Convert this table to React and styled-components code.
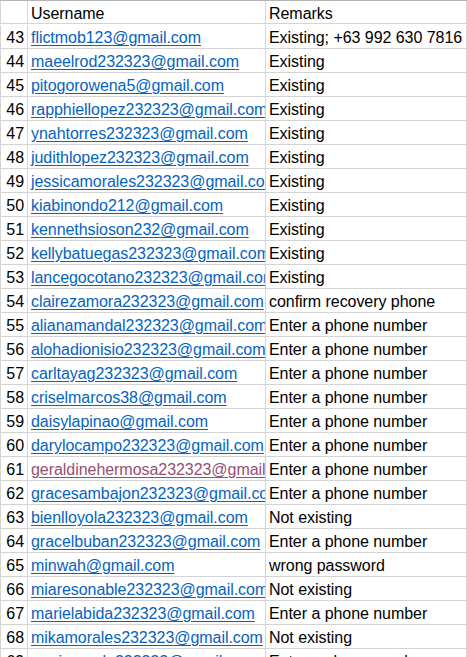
import React from "react";
import styled, { createGlobalStyle } from "styled-components";

const Global = createGlobalStyle`
  html, body { margin: 0; padding: 0; background: #fff; }
  body { font-family: "Liberation Sans", Arial, sans-serif; }
`;

const Sheet = styled.div`
  display: grid;
  grid-template-columns: 28px 238px 201px;
  grid-auto-rows: 24px;
  width: 467px;
  border-top: 1px solid #b5b5b5;
  box-sizing: border-box;
  font-family: "Liberation Sans", Arial, sans-serif;
  font-size: 16px;
  letter-spacing: -0.05px;
  color: #000;
`;

const Cell = styled.div`
  box-sizing: border-box;
  border-right: 1px solid #d4d4d4;
  border-bottom: 1px solid #d4d4d4;
  line-height: 22px;
  white-space: nowrap;
  overflow: hidden;
  padding: 2px 3px 0 3px;
  height: ${(p) => (p.$header ? "23px" : "24px")};
`;

const RowNum = styled(Cell)`
  border-left: 1px solid #d4d4d4;
  text-align: right;
  padding: 2px 3px 0 0;
`;

const HeadCell = styled(Cell)`
  padding-top: 2px;
`;

const Link = styled.a`
  color: ${(p) => (p.$visited ? "#954F72" : "#0563C1")};
  text-decoration: underline;
  text-underline-offset: 2px;
`;

const rows = [
  [43, "flictmob123@gmail.com", "Existing; +63 992 630 7816"],
  [44, "maeelrod232323@gmail.com", "Existing"],
  [45, "pitogorowena5@gmail.com", "Existing"],
  [46, "rapphiellopez232323@gmail.com", "Existing"],
  [47, "ynahtorres232323@gmail.com", "Existing"],
  [48, "judithlopez232323@gmail.com", "Existing"],
  [49, "jessicamorales232323@gmail.com", "Existing"],
  [50, "kiabinondo212@gmail.com", "Existing"],
  [51, "kennethsioson232@gmail.com", "Existing"],
  [52, "kellybatuegas232323@gmail.com", "Existing"],
  [53, "lancegocotano232323@gmail.com", "Existing"],
  [54, "clairezamora232323@gmail.com", "confirm recovery phone"],
  [55, "alianamandal232323@gmail.com", "Enter a phone number"],
  [56, "alohadionisio232323@gmail.com", "Enter a phone number"],
  [57, "carltayag232323@gmail.com", "Enter a phone number"],
  [58, "criselmarcos38@gmail.com", "Enter a phone number"],
  [59, "daisylapinao@gmail.com", "Enter a phone number"],
  [60, "darylocampo232323@gmail.com", "Enter a phone number"],
  [61, "geraldinehermosa232323@gmail.com", "Enter a phone number", true],
  [62, "gracesambajon232323@gmail.com", "Enter a phone number"],
  [63, "bienlloyola232323@gmail.com", "Not existing"],
  [64, "gracelbuban232323@gmail.com", "Enter a phone number"],
  [65, "minwah@gmail.com", "wrong password"],
  [66, "miaresonable232323@gmail.com", "Not existing"],
  [67, "marielabida232323@gmail.com", "Enter a phone number"],
  [68, "mikamorales232323@gmail.com", "Not existing"],
  [69, "marianoralo232323@gmail.com", "Enter a phone number"],
];

export default function App() {
  return (
    <>
      <Global />
      <Sheet>
        <RowNum $header></RowNum>
        <HeadCell $header>Username</HeadCell>
        <HeadCell $header>Remarks</HeadCell>
        {rows.map(([n, user, remark, visited]) => (
          <React.Fragment key={n}>
            <RowNum>{n}</RowNum>
            <Cell>
              <Link $visited={visited}>{user}</Link>
            </Cell>
            <Cell>{remark}</Cell>
          </React.Fragment>
        ))}
      </Sheet>
    </>
  );
}
